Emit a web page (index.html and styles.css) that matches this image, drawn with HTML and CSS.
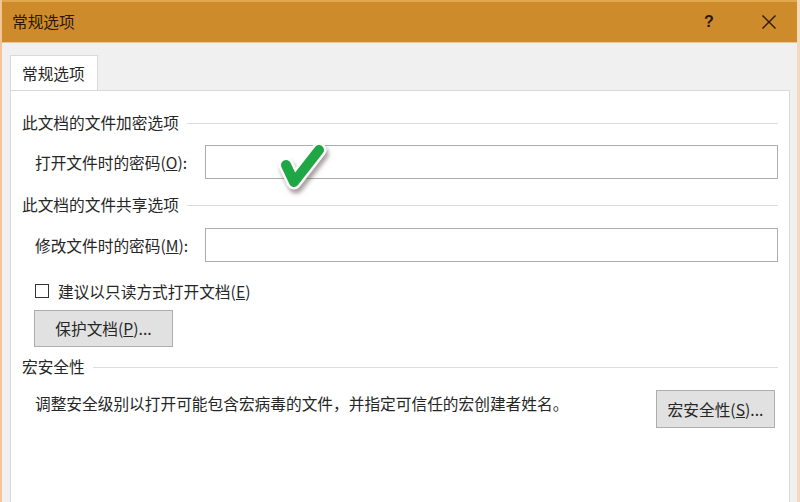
FILE: index.html
```html
<!DOCTYPE html>
<html lang="zh-CN">
<head>
    <meta charset="UTF-8">
    <title>常规选项</title>
    <link rel="stylesheet" href="styles.css">
</head>
<body>
    <div class="dialog">
        <div class="titlebar">
            <span class="title">常规选项</span>
            <span class="help">?</span>
            <span class="close">
                <svg width="16" height="16" viewBox="0 0 16 16"><path d="M1.5 1.5 L14.5 14.5 M14.5 1.5 L1.5 14.5" stroke="#2a1a05" stroke-width="1.4" fill="none"/></svg>
            </span>
        </div>
        <div class="body">
            <div class="tabs">
                <div class="tab active">常规选项</div>
            </div>
            <div class="panel">
                <div class="group">
                    <span>此文档的文件加密选项</span>
                    <div class="rule"></div>
                </div>
                <div class="row row-open">
                    <label>打开文件时的密码(<u>O</u>):</label>
                    <div class="field"></div>
                </div>
                <div class="group group-share">
                    <span>此文档的文件共享选项</span>
                    <div class="rule"></div>
                </div>
                <div class="row row-modify">
                    <label>修改文件时的密码(<u>M</u>):</label>
                    <div class="field"></div>
                </div>
                <div class="check-row">
                    <span class="checkbox"></span>
                    <span>建议以只读方式打开文档(<u>E</u>)</span>
                </div>
                <button class="btn btn-protect">保护文档(<u>P</u>)...</button>
                <div class="group group-macro">
                    <span>宏安全性</span>
                    <div class="rule"></div>
                </div>
                <div class="macro-row">
                    <p class="macro-text">调整安全级别以打开可能包含宏病毒的文件，并指定可信任的宏创建者姓名。</p>
                    <button class="btn btn-macro">宏安全性(<u>S</u>)...</button>
                </div>

                <!-- green tick drawn over the first password box -->
                <svg class="tick" width="56" height="54" viewBox="0 0 56 54">
                    <polyline points="10,24 18,41 43,9" fill="none" stroke="#ffffff" stroke-width="15" stroke-linecap="round" stroke-linejoin="round"/>
                    <polyline points="10,24 18,41 43,9" fill="none" stroke="#1fa645" stroke-width="10" stroke-linecap="round" stroke-linejoin="round"/>
                </svg>
            </div>
        </div>
    </div>
</body>
</html>
```

FILE: styles.css
```css
html, body {
    margin: 0;
    padding: 0;
}
body {
    font-family: "Noto Sans CJK SC", "Liberation Sans", sans-serif;
    font-size: 15.7px;
    color: #262626;
    background: #f0f0f0;
}
.dialog {
    width: 800px;
    height: 502px;
    overflow: hidden;
    box-sizing: border-box;
    border-left: 2px solid #f3c596;
    border-right: 3px solid #f3d9bd;
    background: #f0f0f0;
}
.titlebar {
    height: 40px;
    background: #cd8b2b;
    border-top: 2px solid #e2a84c;
    border-bottom: 1px solid #f2c58e;
    display: flex;
    align-items: center;
    padding-left: 10px;
    color: #2a1a05;
}
.title {
    flex: 1;
    line-height: 20px;
}
.help {
    width: 57px;
    text-align: left;
    font-family: "Liberation Sans", sans-serif;
    font-size: 16px;
    font-weight: bold;
}
.close {
    width: 36px;
    display: flex;
    align-items: center;
}
.body {
    padding: 12px 7px 0 8px;
}
.tabs {
    display: flex;
}
.tab {
    width: 88px;
    height: 36px;
    line-height: 36px;
    padding-left: 11px;
    box-sizing: border-box;
    background: #ffffff;
    border: 1px solid #d9d9d9;
    border-bottom: none;
    margin-bottom: -1px;
    position: relative;
}
.panel {
    position: relative;
    background: #ffffff;
    border: 1px solid #d9d9d9;
    height: 420px;
    padding: 20px 11px 0 11px;
}
.group {
    display: flex;
    align-items: center;
    height: 24px;
    line-height: 24px;
}
.group .rule {
    flex: 1;
    height: 1px;
    background: #dcdcdc;
    margin-left: 8px;
}
.group-share {
    margin-top: 14px;
}
.group-macro {
    margin-top: 8px;
}
.row {
    display: flex;
    align-items: center;
    padding-left: 13px;
    margin-top: 10px;
}
.row-modify {
    margin-top: 11px;
}
.row label {
    width: 170px;
}
.field {
    flex: 1;
    height: 32px;
    border: 1px solid #adadad;
    background: #ffffff;
}
.check-row {
    display: flex;
    align-items: center;
    gap: 9px;
    height: 24px;
    margin-top: 17px;
    padding-left: 13px;
}
.checkbox {
    width: 12px;
    height: 12px;
    border: 1px solid #333333;
    background: #ffffff;
}
.btn {
    font-family: inherit;
    font-size: 15.7px;
    color: #262626;
    background: #e1e1e1;
    border: 1px solid #adadad;
    padding: 0;
    display: block;
}
.btn-protect {
    width: 139px;
    height: 37px;
    margin: 7px 0 0 12px;
}
.macro-row {
    display: flex;
    align-items: flex-start;
    padding-left: 13px;
    margin-top: 11px;
}
.macro-text {
    flex: 1;
    margin: 3px 0 0 0;
    line-height: 22px;
}
.btn-macro {
    width: 119px;
    height: 38px;
    margin-right: 3px;
}
.tick {
    position: absolute;
    left: 265px;
    top: 50px;
    filter: drop-shadow(2px 4px 2px rgba(60, 40, 40, 0.45));
}
```
